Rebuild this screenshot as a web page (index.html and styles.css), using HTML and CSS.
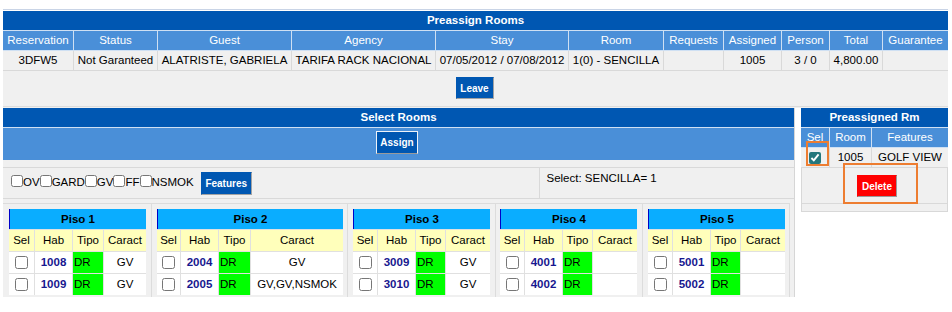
FILE: index.html
```html
<!DOCTYPE html>
<html>
<head>
<meta charset="utf-8">
<title>Preassign Rooms</title>
<link rel="stylesheet" href="styles.css">
</head>
<body>
<div class="page">
  <section class="preassign">
    <div class="title">Preassign Rooms</div>
    <table class="res">
      <colgroup>
        <col class="c1"><col class="c2"><col class="c3"><col class="c4"><col class="c5"><col class="c6"><col class="c7"><col class="c8"><col class="c9"><col class="c10"><col class="c11">
      </colgroup>
      <thead>
        <tr><th>Reservation</th><th>Status</th><th>Guest</th><th>Agency</th><th>Stay</th><th>Room</th><th>Requests</th><th>Assigned</th><th>Person</th><th>Total</th><th>Guarantee</th></tr>
      </thead>
      <tbody>
        <tr><td>3DFW5</td><td>Not Garanteed</td><td>ALATRISTE, GABRIELA</td><td>TARIFA RACK NACIONAL</td><td>07/05/2012 / 07/08/2012</td><td>1(0) - SENCILLA</td><td></td><td>1005</td><td>3 / 0</td><td>4,800.00</td><td></td></tr>
      </tbody>
    </table>
    <div class="leave-row"><button class="btn btn-blue btn-leave">Leave</button></div>
  </section>

  <div class="lower">
    <section class="select">
      <div class="title">Select Rooms</div>
      <div class="assign-bar"><button class="btn btn-assign">Assign</button></div>
      <table class="feat">
        <tr>
          <td class="feat-left"><label class="opt"><input type="checkbox">OV</label><label class="opt"><input type="checkbox">GARD</label><label class="opt"><input type="checkbox">GV</label><label class="opt"><input type="checkbox">FF</label><label class="opt"><input type="checkbox">NSMOK</label><button class="btn btn-blue btn-features">Features</button></td>
          <td class="feat-right">Select: SENCILLA= 1</td>
        </tr>
      </table>

      <div class="floors">
        <div class="floor-cell f1">
          <table class="floor fw137">
            <colgroup><col class="s26"><col class="s38"><col class="s31"><col class="s42"></colgroup>
            <tr><th class="piso" colspan="4">Piso 1</th></tr>
            <tr class="sub"><th>Sel</th><th>Hab</th><th>Tipo</th><th>Caract</th></tr>
            <tr><td><input type="checkbox"></td><td class="hab">1008</td><td class="tipo">DR</td><td>GV</td></tr>
            <tr><td><input type="checkbox"></td><td class="hab">1009</td><td class="tipo">DR</td><td>GV</td></tr>
          </table>
        </div>
        <div class="floor-cell f2">
          <table class="floor fw186">
            <colgroup><col class="s24"><col class="s38"><col class="s32"><col class="s92"></colgroup>
            <tr><th class="piso" colspan="4">Piso 2</th></tr>
            <tr class="sub"><th>Sel</th><th>Hab</th><th>Tipo</th><th>Caract</th></tr>
            <tr><td><input type="checkbox"></td><td class="hab">2004</td><td class="tipo">DR</td><td>GV</td></tr>
            <tr><td><input type="checkbox"></td><td class="hab">2005</td><td class="tipo">DR</td><td>GV,GV,NSMOK</td></tr>
          </table>
        </div>
        <div class="floor-cell f3">
          <table class="floor fw137">
            <colgroup><col class="s25"><col class="s38"><col class="s30"><col class="s44"></colgroup>
            <tr><th class="piso" colspan="4">Piso 3</th></tr>
            <tr class="sub"><th>Sel</th><th>Hab</th><th>Tipo</th><th>Caract</th></tr>
            <tr><td><input type="checkbox"></td><td class="hab">3009</td><td class="tipo">DR</td><td>GV</td></tr>
            <tr><td><input type="checkbox"></td><td class="hab">3010</td><td class="tipo">DR</td><td>GV</td></tr>
          </table>
        </div>
        <div class="floor-cell f4">
          <table class="floor fw137">
            <colgroup><col class="s25"><col class="s38"><col class="s30"><col class="s44"></colgroup>
            <tr><th class="piso" colspan="4">Piso 4</th></tr>
            <tr class="sub"><th>Sel</th><th>Hab</th><th>Tipo</th><th>Caract</th></tr>
            <tr><td><input type="checkbox"></td><td class="hab">4001</td><td class="tipo">DR</td><td></td></tr>
            <tr><td><input type="checkbox"></td><td class="hab">4002</td><td class="tipo">DR</td><td></td></tr>
          </table>
        </div>
        <div class="floor-cell f5">
          <table class="floor fw137">
            <colgroup><col class="s25"><col class="s38"><col class="s30"><col class="s44"></colgroup>
            <tr><th class="piso" colspan="4">Piso 5</th></tr>
            <tr class="sub"><th>Sel</th><th>Hab</th><th>Tipo</th><th>Caract</th></tr>
            <tr><td><input type="checkbox"></td><td class="hab">5001</td><td class="tipo">DR</td><td></td></tr>
            <tr><td><input type="checkbox"></td><td class="hab">5002</td><td class="tipo">DR</td><td></td></tr>
          </table>
        </div>
      </div>
    </section>

    <aside class="side">
      <div class="title">Preassigned Rm</div>
      <table class="pre">
        <colgroup><col class="p1"><col class="p2"><col class="p3"></colgroup>
        <tr><th>Sel</th><th>Room</th><th>Features</th></tr>
        <tr><td><input class="chk-on" type="checkbox" checked></td><td>1005</td><td>GOLF VIEW</td></tr>
      </table>
      <div class="side-body">
        <div class="delete-row"><button class="btn btn-red">Delete</button></div>
        <div class="side-foot"></div>
      </div>
      <div class="hl hl-check"></div>
      <div class="hl hl-delete"></div>
    </aside>
  </div>
</div>
</body>
</html>
```

FILE: styles.css
```css
* { box-sizing: border-box; }

body {
  margin: 0;
  background: #fff;
  font-family: "Liberation Sans", Arial, sans-serif;
  font-size: 11.5px;
  color: #000;
}

.page {
  width: 945px;
  margin: 9px 0 0 3px;
  border-top: 1px solid #c9d4e6;
  padding-top: 1px;
  height: 288px;
  overflow: hidden;
}

.title {
  background: #0057b2;
  color: #fff;
  font-weight: bold;
  text-align: center;
  line-height: 19px;
  height: 20px;
  border-bottom: 1px solid #cfe0f3;
}

/* ---- reservation table ---- */
.preassign {
  background: #f0f0f0;
  padding-bottom: 1px;
}

.res {
  width: 945px;
  table-layout: fixed;
  border-collapse: separate;
  border-spacing: 0;
}
.res .c1 { width: 71px; }
.res .c2 { width: 84px; }
.res .c3 { width: 134px; }
.res .c4 { width: 144px; }
.res .c5 { width: 133px; }
.res .c6 { width: 95px; }
.res .c7 { width: 60px; }
.res .c8 { width: 58px; }
.res .c9 { width: 48px; }
.res .c10 { width: 53px; }
.res .c11 { width: 65px; }

.res th, .pre th {
  background: #4a8fd8;
  color: #fff;
  font-weight: normal;
  padding: 0;
  line-height: 19px;
  border-right: 1px solid #cfe0f3;
  border-bottom: 1px solid #cfe0f3;
  white-space: nowrap;
}
.res td, .pre td {
  background: #f0f0f0;
  padding: 0;
  line-height: 19px;
  text-align: center;
  border-right: 1px solid #d9d9d9;
  border-bottom: 1px solid #d9d9d9;
  white-space: nowrap;
  overflow: hidden;
}
.res th:last-child, .res td:last-child,
.pre th:last-child, .pre td:last-child { border-right: 0; }

.leave-row {
  text-align: center;
  padding: 6px 2px 7px 0;
  border-bottom: 1px solid #dcdcdc;
}

/* ---- buttons ---- */
.btn {
  font: bold 10px "Liberation Sans", Arial, sans-serif;
  color: #fff;
  height: 22px;
  padding: 0;
  border: 1px solid;
  vertical-align: middle;
  cursor: pointer;
}
.btn-blue {
  background: #0057b2;
  border-color: #0057b2 #a3a3a3 #a3a3a3 #0057b2;
}
.btn-leave { width: 38px; }
.btn-features { width: 51px; height: 23px; margin-left: 7px; }
.btn-assign {
  width: 42px;
  height: 23px;
  background: #0057b2;
  border-color: #eef2f8 #eef2f8 #9a9a9a #eef2f8;
}
.btn-red {
  width: 40px;
  background: #ff0000;
  border-color: #ff0000 #9a9a9a #9a9a9a #ff0000;
}

/* ---- lower area ---- */
.lower {
  display: flex;
  align-items: flex-start;
  gap: 6px;
}

.select {
  width: 792px;
  height: 189px;
  overflow: hidden;
  background: #f0f0f0;
  border-right: 1px solid #d6d6d6;
}

.assign-bar {
  background: #4a8fd8;
  height: 32px;
  padding: 3px 3px 0 0;
  text-align: center;
}

.feat {
  width: 791px;
  margin-top: 7px;
  border-collapse: collapse;
  border-top: 1px solid #d9d9d9;
  border-bottom: 1px solid #d9d9d9;
}
.feat td { height: 31px; padding: 0; }
.feat-left {
  width: 536px;
  padding-left: 8px !important;
  border-right: 1px solid #d9d9d9;
  vertical-align: middle;
  white-space: nowrap;
}
.feat-right {
  vertical-align: top;
  padding: 4px 7px 0 !important;
}
.opt input {
  width: 12px;
  height: 12px;
  margin: 0;
  vertical-align: -1px;
}

.floors {
  display: flex;
  width: 787px;
  margin-top: 4px;
  border-top: 1px solid #dcdcdc;
}
.floor-cell {
  padding: 5px 0 0 5px;
  border-right: 1px solid #dcdcdc;
  height: 100px;
}
.f1 { width: 149px; padding-left: 6px; }
.f2 { width: 196px; }
.f3 { width: 148px; }
.f4 { width: 147px; padding-left: 4px; }
.f5 { width: 147px; }

.floor {
  table-layout: fixed;
  border-collapse: separate;
  border-spacing: 0;
}
.fw137 { width: 137px; }
.fw186 { width: 186px; }
.s24 { width: 24px; } .s25 { width: 25px; } .s26 { width: 26px; }
.s30 { width: 30px; } .s31 { width: 31px; } .s32 { width: 32px; }
.s38 { width: 38px; } .s42 { width: 42px; } .s44 { width: 44px; }
.s92 { width: 92px; }

.floor th.piso {
  background: #0aadff;
  color: #000;
  font-weight: bold;
  line-height: 20px;
  padding: 0;
  border-left: 1px solid #0000c8;
}
.floor .sub th,
.floor td {
  padding: 0;
  line-height: 21px;
  height: 22px;
  border-top: 1px solid #e0e0e0;
  border-right: 1px solid #e0e0e0;
  text-align: center;
  white-space: nowrap;
  overflow: hidden;
}
.floor .sub th {
  background: #ffffbb;
  font-weight: normal;
}
.floor td { background: #fff; }
.floor tr > *:last-child { border-right: 0; }
.floor td input {
  margin: 0;
  vertical-align: middle;
}
.floor td.hab { font-weight: bold; color: #17178f; }
.floor td.tipo { background: #00ff00; text-align: left; padding-left: 1px; }

/* ---- side panel ---- */
.side {
  position: relative;
  width: 147px;
}
.pre {
  width: 147px;
  table-layout: fixed;
  border-collapse: separate;
  border-spacing: 0;
}
.pre .p1 { width: 29px; }
.pre .p2 { width: 42px; }
.pre .p3 { width: 76px; }
.chk-on {
  width: 12px;
  height: 12px;
  margin: 0;
  vertical-align: middle;
  accent-color: #24777c;
}
.side-body {
  background: #f0f0f0;
  border: 1px solid #d8d8d8;
  border-top: 0;
}
.delete-row {
  height: 36px;
  padding: 7px 0 0 5px;
  text-align: center;
  border-bottom: 1px solid #d9d9d9;
}
.side-foot { height: 7px; }

.hl {
  position: absolute;
  border: 2px solid #ed7d31;
}
.hl-check { left: 5px; top: 33px; width: 23px; height: 25px; }
.hl-delete { left: 42px; top: 55px; width: 75px; height: 41px; }
```
